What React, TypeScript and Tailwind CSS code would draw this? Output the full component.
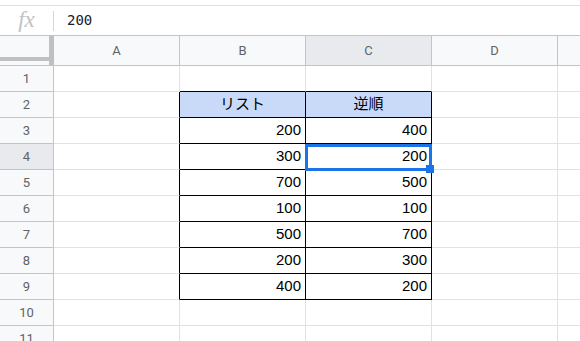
import React from "react";

const cols = ["A", "B", "C", "D"];
const data: Record<number, [string, string]> = {
  2: ["リスト", "逆順"],
  3: ["200", "400"],
  4: ["300", "200"],
  5: ["700", "500"],
  6: ["100", "100"],
  7: ["500", "700"],
  8: ["200", "300"],
  9: ["400", "200"],
};

const cellFont = {
  fontFamily: '"Liberation Sans", Arial, "Noto Sans CJK JP", sans-serif',
};

function Row({ n }: { n: number }) {
  const inTable = n >= 2 && n <= 9;
  const selected = n === 4;
  const d = data[n];
  return (
    <div className="flex h-[26px] shrink-0">
      <div
        className={`w-[54px] shrink-0 border-r border-b border-[#c4c4c4] flex items-center justify-center text-[13px] text-[#5f6368] ${
          selected ? "bg-[#e8eaed]" : "bg-[#f8f9fa]"
        }`}
        style={{ fontFamily: "Roboto, Arial, sans-serif" }}
      >
        {n}
      </div>
      {/* A */}
      <div
        className={`w-[126px] shrink-0 border-b border-b-[#e2e2e2] border-r ${
          inTable ? "border-r-black" : "border-r-[#e2e2e2]"
        }`}
      />
      {/* B */}
      <div
        className={`w-[126px] shrink-0 border-r border-b flex items-end pb-[2px] px-[4px] text-[15px] text-black ${
          inTable ? "border-r-black" : "border-r-[#e2e2e2]"
        } ${n >= 1 && n <= 9 ? "border-b-black" : "border-b-[#e2e2e2]"} ${
          n === 2 ? "bg-[#c9daf8] justify-center" : "justify-end"
        }`}
        style={cellFont}
      >
        {d ? d[0] : ""}
      </div>
      {/* C */}
      <div
        className={`w-[126px] shrink-0 border-r border-b flex items-end pb-[2px] px-[4px] text-[15px] text-black ${
          inTable ? "border-r-black" : "border-r-[#e2e2e2]"
        } ${n >= 1 && n <= 9 ? "border-b-black" : "border-b-[#e2e2e2]"} ${
          n === 2 ? "bg-[#c9daf8] justify-center" : "justify-end"
        }`}
        style={cellFont}
      >
        {d ? d[1] : ""}
      </div>
      {/* D */}
      <div className="w-[126px] shrink-0 border-r border-b border-[#e2e2e2]" />
      {/* E */}
      <div className="flex-1 border-b border-[#e2e2e2]" />
    </div>
  );
}

export default function App() {
  return (
    <div className="relative w-[580px] h-[341px] overflow-hidden bg-white">
      <div className="h-[6px] border-b border-[#e0e0e0]" />
      {/* formula bar */}
      <div className="flex items-center h-[30px] border-b border-[#c4c4c4]">
        <div className="w-[53px] flex items-center justify-center">
          <span
            className="italic text-[23px] text-[#c2c2c2] leading-none -mt-[2px]"
            style={{ fontFamily: '"Liberation Serif", "Times New Roman", serif' }}
          >
            fx
          </span>
        </div>
        <div className="w-px h-[20px] bg-[#d6d6d6]" />
        <div
          className="pl-[13px] text-[14px] text-[#202124]"
          style={{ fontFamily: '"DejaVu Sans Mono", monospace' }}
        >
          200
        </div>
      </div>
      {/* column headers */}
      <div className="flex h-[30px] border-b border-[#c4c4c4] bg-[#f8f9fa]">
        <div className="w-[54px] shrink-0 border-r-[5px] border-[#c0c0c0]">
          <div className="h-[25px] border-b-[4px] border-[#c0c0c0]" />
        </div>
        {cols.map((c) => (
          <div
            key={c}
            className={`w-[126px] shrink-0 border-r border-[#c4c4c4] flex items-center justify-center text-[13px] text-[#5f6368] ${
              c === "C" ? "bg-[#e8eaed]" : ""
            }`}
            style={{ fontFamily: "Roboto, Arial, sans-serif" }}
          >
            {c}
          </div>
        ))}
        <div className="flex-1" />
      </div>
      {Array.from({ length: 11 }, (_, i) => (
        <Row key={i} n={i + 1} />
      ))}
      {/* selection */}
      <div className="absolute left-[305px] top-[144px] w-[127px] h-[27px] border-[3px] border-[#1a73e8] pointer-events-none" />
      <div className="absolute left-[426px] top-[165px] w-[8px] h-[8px] bg-[#1a73e8]" />
    </div>
  );
}
